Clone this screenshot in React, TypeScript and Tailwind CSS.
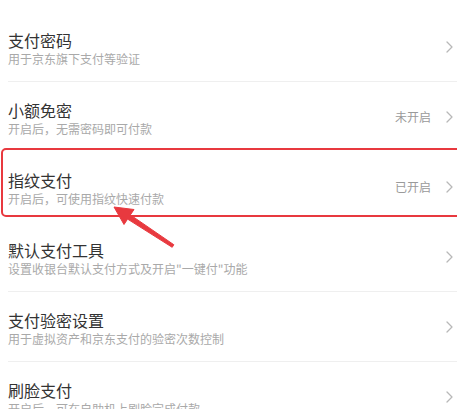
import React from "react";

const rows: { title: string; sub: string; right?: string; divider: boolean }[] = [
  { title: "支付密码", sub: "用于京东旗下支付等验证", divider: true },
  { title: "小额免密", sub: "开启后，无需密码即可付款", right: "未开启", divider: false },
  { title: "指纹支付", sub: "开启后，可使用指纹快速付款", right: "已开启", divider: false },
  { title: "默认支付工具", sub: "设置收银台默认支付方式及开启\"一键付\"功能", divider: true },
  { title: "支付验密设置", sub: "用于虚拟资产和京东支付的验密次数控制", divider: true },
  { title: "刷脸支付", sub: "开启后，可在自助机上刷脸完成付款", divider: true },
];

function Chevron() {
  return (
    <svg width="7" height="12" viewBox="0 0 7 12" className="shrink-0">
      <polyline points="1,1 6,6 1,11" fill="none" stroke="#b8b8b8" strokeWidth="1.3" strokeLinecap="round" strokeLinejoin="round" />
    </svg>
  );
}

export default function App() {
  return (
    <div
      className="relative w-[457px] h-[409px] overflow-hidden bg-white pt-[12px]"
      style={{ fontFamily: '"Noto Sans CJK SC", "Noto Sans", sans-serif' }}
    >
      {rows.map((r, i) => (
        <div
          key={i}
          className={
            r.divider
              ? "ml-[8px] h-[70px] flex justify-between items-center pr-[4px] border-b border-[#efefef]"
              : "ml-[8px] h-[70px] flex justify-between items-center pr-[4px] border-b border-transparent"
          }
        >
          <div className="self-start pt-[17px] flex flex-col">
            <div className="text-[16px] leading-[22px] text-[#333333]">{r.title}</div>
            <div className="text-[12px] leading-[16px] text-[#a9a9a9]">{r.sub}</div>
          </div>
          <div className="flex items-center">
            {r.right && <span className="text-[12px] leading-[16px] text-[#9a9a9a] mr-[15px]">{r.right}</span>}
            <Chevron />
          </div>
        </div>
      ))}

      <div className="absolute left-[1px] top-[148px] w-[470px] h-[69px] border-2 border-[#e8393f] rounded-[5px]" />

      <svg className="absolute left-0 top-0" width="457" height="409" viewBox="0 0 457 409">
        <polygon
          points="114,207 134,209.5 130.4,214.9 173.8,244.7 172.2,247.3 127.6,219.1 124,224.5"
          fill="#e8393f"
          stroke="#e8393f"
          strokeWidth="1"
          strokeLinejoin="round"
        />
      </svg>
    </div>
  );
}
